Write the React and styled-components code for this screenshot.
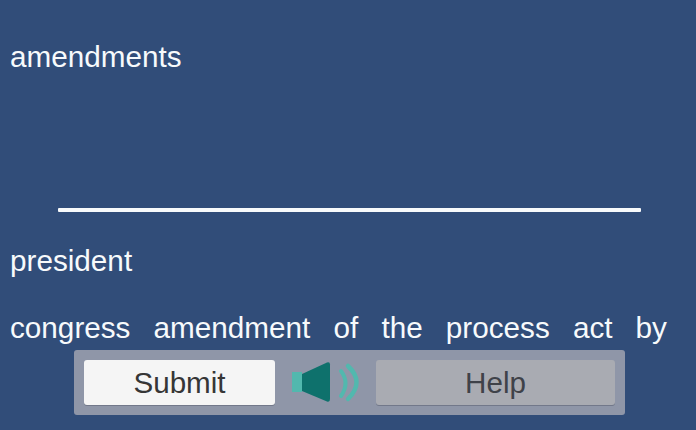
import React from 'react';
import styled, { createGlobalStyle } from 'styled-components';

const GlobalStyle = createGlobalStyle`
  html, body {
    margin: 0;
    padding: 0;
    background-color: #314d79;
  }
`;

const Page = styled.div`
  width: 696px;
  height: 430px;
  overflow: hidden;
  display: flex;
  flex-direction: column;
  background-color: #314d79;
  font-family: "Liberation Sans", Arial, sans-serif;
`;

const Word = styled.div`
  padding-left: 10px;
  margin-top: ${(p) => p.$top}px;
  height: 34px;
  line-height: 34px;
  font-size: 29.7px;
  color: #f7fafc;
`;

const AnswerLine = styled.div`
  height: 4px;
  margin: 134px 55px 0 58px;
  background-color: #f8fafb;
  border-radius: 1px;
`;

const Choices = styled.div`
  display: flex;
  justify-content: space-between;
  margin: 33px 29px 0 10px;
  height: 34px;
  line-height: 34px;
  font-size: 29.7px;
  color: #f7fafc;
`;

const Toolbar = styled.div`
  display: flex;
  align-items: center;
  width: 551px;
  height: 65px;
  box-sizing: border-box;
  margin: 5px 0 0 74px;
  padding: 0 10px;
  background-color: #8f96a8;
  border-radius: 3px;
`;

const Button = styled.div`
  flex: 0 0 ${(p) => p.$width}px;
  height: 45px;
  display: flex;
  align-items: center;
  justify-content: center;
  border-radius: 3px;
  font-size: 29.6px;
  color: ${(p) => (p.$disabled ? '#3f4249' : '#363636')};
  background-color: ${(p) => (p.$disabled ? '#a9abb2' : '#f5f5f5')};
  box-shadow: 0 1px 0 rgba(60, 66, 84, 0.35);
`;

const SoundIcon = styled.svg`
  flex: 0 0 auto;
  width: 72px;
  height: 45px;
  margin: 0 14px 0 15px;
`;

const Speaker = () => (
  <SoundIcon viewBox="0 0 72 45" fill="none">
    <rect x="2" y="12" width="10" height="20" fill="#52b8ae" />
    <path d="M12 14 L37 2.5 Q40 1.5 40 4.5 L40 39 Q40 42.5 37 41.5 L12 31 Z" fill="#0e716c" />
    <path d="M51 11 Q60 23 51 36" stroke="#52b8ae" strokeWidth="4" strokeLinecap="round" />
    <path d="M58 6 Q75 22 58 39" stroke="#52b8ae" strokeWidth="4.5" strokeLinecap="round" />
  </SoundIcon>
);

const words = ['congress', 'amendment', 'of', 'the', 'process', 'act', 'by'];

const App = () => {
  return (
    <Page>
      <GlobalStyle />
      <Word $top={40}>amendments</Word>
      <AnswerLine />
      <Word $top={32}>president</Word>
      <Choices>
        {words.map((w) => (
          <span key={w}>{w}</span>
        ))}
      </Choices>
      <Toolbar>
        <Button $width={191}>Submit</Button>
        <Speaker />
        <Button $width={239} $disabled>
          Help
        </Button>
      </Toolbar>
    </Page>
  );
};

export default App;
